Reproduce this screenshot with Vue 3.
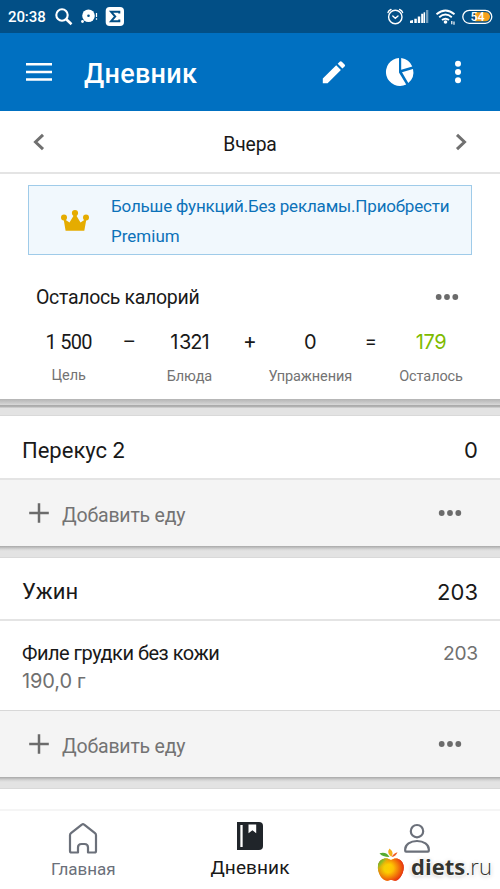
<script setup>
const totals = [
  { value: '1 500', label: 'Цель', kind: 'goal' },
  { value: '–', kind: 'sign' },
  { value: '1 321', label: 'Блюда', kind: 'tight' },
  { value: '+', kind: 'sign' },
  { value: '0', label: 'Упражнения' },
  { value: '=', kind: 'sign' },
  { value: '179', label: 'Осталось', kind: 'left' },
]
const meals = [
  { name: 'Перекус', suffix: '2', kcal: '0', items: [] },
  { name: 'Ужин', kcal: '203', items: [{ name: 'Филе грудки без кожи', amount: '190,0', unit: 'г', kcal: '203' }] },
]
</script>

<template>
  <div class="screen">
    <div class="status">
      <span class="clock">20:38</span>
      <svg class="st-left" width="80" height="33" viewBox="0 0 80 33">
        <circle cx="9" cy="15" r="5.700" fill="none" stroke="#fff" stroke-width="2.100" />
        <path d="M13 19 18.500 24.300" stroke="#fff" stroke-width="2.600" />
        <circle cx="35.500" cy="15.700" r="6.300" fill="#fff" />
        <circle cx="35.500" cy="15.700" r="1.300" fill="#024f86" />
        <circle cx="29.500" cy="21.500" r="1.400" fill="#fff" />
        <path d="M43.500 13v4M43.500 18.300v1.500" stroke="#fff" stroke-width="1.200" />
        <rect x="52.700" y="7" width="18.300" height="19" rx="4" fill="#fff" />
        <path d="M66.300 13.500v-1.700h-8.200l4.100 4.700-4.100 4.700h8.200v-1.700" fill="none" stroke="#024f86" stroke-width="2" />
      </svg>
      <svg class="st-right" width="110" height="33" viewBox="386 0 110 33">
        <g fill="none" stroke="#fff" stroke-width="1.400" stroke-linecap="round">
          <circle cx="395.300" cy="17" r="6.700" />
          <path d="M388 12.500q.5-2 3-3M402.600 12.500q-.5-2-3-3M392.800 16l2.500 2.300 2.700-2.300" />
        </g>
        <g fill="#fff">
          <path d="M410 20.700l3-.7v3h-3zM414.300 18.700h2.500V23h-2.500zM417.800 16.500h2.400V23h-2.400zM421.200 13.700h2.200V23h-2.200z" />
          <path opacity=".45" d="M426 10h2.300v13H426z" />
          <path d="M423.600 12.300h1.500V23h-1.500z" />
          <circle cx="445.500" cy="22" r="1.800" />
        </g>
        <g fill="none" stroke="#fff" stroke-width="1.900">
          <path d="M436.500 14.200q9-7.500 18 0M439.200 17.200q6.300-5.200 12.600 0M442 20q3.500-2.600 7 0" />
          <path d="M451.800 21v3.200M454 21.500v3.200" stroke-width="1.200" />
        </g>
        <rect x="462.800" y="10.300" width="29" height="13" rx="6.500" fill="none" stroke="#fff" stroke-width="1.300" />
        <path d="M475 12.300h10.500a4.500 4.500 0 0 1 0 9H475z" fill="#f5a11c" />
        <text x="477.500" y="21.200" text-anchor="middle" class="battery">54</text>
      </svg>
    </div>

    <header class="appbar">
      <svg width="26" height="20" viewBox="0 0 26 20"><path d="M0 2.200h26M0 9.900h26M0 17.600h26" stroke="#fff" stroke-width="2.500" /></svg>
      <h1>Дневник</h1>
      <svg class="pencil" width="24" height="24" viewBox="0 0 24 24"><path fill="#fff" d="M.8 23.300v-4.800L14.200 5.200l4.700 4.700L5.600 23.300zM15.700 3.700l2-2q1-1 2.100 0l2.800 2.700q1 1 0 2l-2.200 2.200z" /></svg>
      <svg class="pie" width="30" height="30" viewBox="0 0 30 30">
        <path fill="#fff" d="M14 1v14.600l7.200 11.900A14 14 0 1 1 14 1z" />
        <path fill="#fff" d="M16.200 1A14 14 0 0 1 27.300 9.600L16.200 12.700zM28 12a14 14 0 0 1-4.700 14L17 15.200z" />
      </svg>
      <svg class="more" width="8" height="24" viewBox="0 0 8 24"><g fill="#fff"><circle cx="4" cy="3.700" r="3" /><circle cx="4" cy="12" r="3" /><circle cx="4" cy="20.300" r="3" /></g></svg>
    </header>

    <div class="day">
      <svg width="12" height="18" viewBox="0 0 12 18"><path d="M10 1.800 2.500 9l7.500 7.200" /></svg>
      <span>Вчера</span>
      <svg width="12" height="18" viewBox="0 0 12 18"><path d="M2 1.800 9.500 9 2 16.200" /></svg>
    </div>

    <section class="summary">
      <div class="premium">
        <svg width="30" height="23" viewBox="0 0 30 23"><g fill="#e5ac00"><circle cx="4" cy="8.500" r="3" /><circle cx="15" cy="4" r="3.100" /><circle cx="26" cy="8.500" r="3" /><path d="M3.500 9.500 9.500 13.500 14 6h2l4.500 7.500 6-4L24.300 21.800H5.600z" /></g></svg>
        <p><span class="promo">Больше функций.Без рекламы.Приобрести</span><br /><span class="plan">Premium</span></p>
      </div>
      <div class="sum-head">
        <span>Осталось калорий</span>
        <svg class="dots" width="24" height="8" viewBox="0 0 24 8"><circle cx="3.700" cy="4" r="2.900" /><circle cx="12" cy="4" r="2.900" /><circle cx="20.300" cy="4" r="2.900" /></svg>
      </div>
      <div class="equation">
        <div v-for="(t, i) in totals" :key="i" class="term" :class="t.kind">
          <span class="value">{{ t.value }}</span>
          <span v-if="t.label" class="label">{{ t.label }}</span>
        </div>
      </div>
    </section>
    <div class="gap first"></div>

    <template v-for="meal in meals" :key="meal.name">
      <section class="meal" :class="{ filled: meal.items.length }">
        <div class="meal-head">
          <span>{{ meal.name }}<b v-if="meal.suffix">{{ meal.suffix }}</b></span>
          <span class="num">{{ meal.kcal }}</span>
        </div>
        <div v-for="item in meal.items" :key="item.name" class="food">
          <div>
            <div class="food-name">{{ item.name }}</div>
            <div class="amount"><span class="num">{{ item.amount }}</span> {{ item.unit }}</div>
          </div>
          <span class="num kcal">{{ item.kcal }}</span>
        </div>
        <div class="add">
          <svg width="20" height="20" viewBox="0 0 20 20"><path d="M10 .2v19.600M.2 10h19.600" stroke="#6b6b6b" stroke-width="2.500" /></svg>
          <span>Добавить еду</span>
          <svg class="dots" width="24" height="8" viewBox="0 0 24 8"><circle cx="3.700" cy="4" r="2.900" /><circle cx="12" cy="4" r="2.900" /><circle cx="20.300" cy="4" r="2.900" /></svg>
        </div>
      </section>
      <div class="gap"></div>
    </template>

    <nav class="tabs">
      <div class="tab">
        <svg width="30" height="32" viewBox="0 0 30 32"><path d="M2 13.200Q2 12 3 11.200L13.800 2.600q1.200-1 2.400 0L27 11.200q1 .8 1 2V29q0 1.500-1.500 1.500h-6.500V25.500q0-3.500-3.500-3.500h-3q-3.500 0-3.500 3.500v5h-6.500Q2 30.500 2 29z" fill="none" stroke="#6b707a" stroke-width="2.200" stroke-linejoin="round" /></svg>
        <span>Главная</span>
      </div>
      <div class="tab active">
        <svg width="26" height="28" viewBox="0 0 26 28"><path fill="#20252a" d="M0 0h22q4 0 4 4v20q0 4-4 4H0z" /><path d="M4.500 3v22" stroke="#fff" stroke-width="2.300" /><path fill="#fff" d="M11.500 2.500h7.700v8.700l-3.800-2.900-3.900 2.900z" /></svg>
        <span>Дневник</span>
      </div>
      <div class="tab">
        <svg width="28" height="32" viewBox="0 0 28 32"><g fill="none" stroke="#6b707a" stroke-width="2.200"><circle cx="14" cy="9.200" r="6.200" /><path d="M2.200 28.800v-1.600C2.200 22.500 7.200 19 14 19s11.800 3.500 11.800 8.200v1.600q0 .8-.8.800H3q-.8 0-.8-.8z" /></g></svg>
      </div>
    </nav>

    <div class="brand">
      <svg width="28" height="34" viewBox="0 0 28 34">
        <defs>
          <linearGradient id="skin" x1="0" y1="0" x2="1" y2=".25"><stop offset="0" stop-color="#4ca53b" /><stop offset=".25" stop-color="#c5d51b" /><stop offset=".52" stop-color="#ffc400" /><stop offset=".75" stop-color="#f36b16" /><stop offset="1" stop-color="#d82b16" /></linearGradient>
          <radialGradient id="blush" cx=".42" cy=".45" r=".6"><stop offset=".3" stop-color="#ffd000" stop-opacity=".75" /><stop offset="1" stop-color="#e8300d" stop-opacity=".9" /></radialGradient>
          <linearGradient id="leafy" x1="0" y1="0" x2=".8" y2=".7"><stop offset="0" stop-color="#3f9f38" /><stop offset=".4" stop-color="#8cc426" stop-opacity=".85" /><stop offset=".7" stop-color="#ffd000" stop-opacity="0" /></linearGradient>
        </defs>
        <path fill="url(#skin)" d="M14 12C9 8.500 2 11 1 17.500c-1 7 4 15 9 15.300 2 .2 2.500-.7 4-.7s2.500.9 4.500.7C23 32 28 23.500 26.500 17 25 11 19 8.500 14 12z" />
        <path fill="url(#blush)" d="M14 12C9 8.500 2 11 1 17.500c-1 7 4 15 9 15.300 2 .2 2.500-.7 4-.7s2.500.9 4.500.7C23 32 28 23.500 26.500 17 25 11 19 8.500 14 12z" />
        <path fill="url(#leafy)" d="M14 12C9 8.500 2 11 1 17.500q-.3 3 .5 6Q5 18 14 19z" />
        <path fill="#57ab31" d="M2.500 5.200q7-2 10 3.800Q5 9 2.500 5.200z" /><path fill="#f5ae18" d="M12.500.5q5 4 1.800 8.300-5-4-1.800-8.300z" /><path fill="#ef5d25" d="M20.500 4.300Q19 8.500 14.800 9q1.500-3.800 5.700-4.700z" />
      </svg>
      <span class="brand-name">diets</span><span class="brand-tld">.ru</span>
    </div>
  </div>
</template>

<style>
body { margin: 0; }
</style>
<style scoped>
* { box-sizing: border-box; }
.screen { position: relative; width: 500px; height: 889px; overflow: hidden; background: #fff; color: #191919; font-family: Roboto, sans-serif; display: flex; flex-direction: column; }
.screen > * { flex: none; }
svg { display: block; flex: none; }
.status { height: 33px; background: #024f86; color: #fff; display: flex; align-items: center; padding: 0 4px 0 8px; }
.clock { width: 45px; font-size: 15px; font-weight: 500; letter-spacing: -.1px; }
.st-right { margin-left: auto; }
.battery { font: 500 12.500px Roboto, sans-serif; fill: #fff; }
.appbar { height: 78px; background: #0070c1; color: #fff; display: flex; align-items: center; padding: 0 38px 0 26px; }
.appbar h1 { margin: 4px auto 0 32px; font-size: 27px; font-weight: 500; line-height: 32px; letter-spacing: .3px; }
.pencil { margin-right: 39px; }
.pie { margin-right: 39px; }
.day { height: 63px; border-bottom: 2px solid #e4e4e4; display: flex; align-items: center; justify-content: space-between; padding: 1px 33px 0; }
.day path { fill: none; stroke: #707070; stroke-width: 3; }
.day span { font-size: 19.300px; padding-top: 4px; letter-spacing: -.1px; }
.summary { height: 225px; padding: 10.500px 28px 0; }
.premium { height: 70px; border: 1px solid #9fcbe9; background: #f1f8fd; display: flex; padding: 6.500px 0 0 31px; }
.premium svg { margin-top: 17px; }
.premium p { margin: 0 0 0 21px; color: #0c72b9; font-size: 17px; line-height: 29.500px; white-space: nowrap; }
.promo { letter-spacing: -.19px; }
.sum-head { height: 30px; margin-top: 27px; padding: 0 13px 0 8px; display: flex; align-items: center; justify-content: space-between; font-size: 19.500px; letter-spacing: -.32px; }
.sum-head span { padding-top: 1px; }
.dots { fill: #6b6b6b; }
.equation { display: grid; grid-template-columns: repeat(7, 60.400px); margin: 15.500px 0 0 10.500px; }
.term { display: flex; flex-direction: column; align-items: center; white-space: nowrap; }
.value { font-family: Inter, sans-serif; font-size: 20px; line-height: 30px; letter-spacing: -.3px; }
.goal .value, .sign .value { font-family: Roboto, sans-serif; }
.goal .value { letter-spacing: -.7px; }
.tight .value { word-spacing: -3px; letter-spacing: -1px; }
.left .value { color: #7ebb00; }
.label { color: #737373; font-size: 14.500px; line-height: 20px; margin-top: 10px; letter-spacing: -.1px; }
.goal .label { margin-top: 9px; }
.gap { height: 12px; background: linear-gradient(#a8a8a8, #d4d4d4 3px, #e3e3e3 5px, #e3e3e3 10.500px, #d9d9d9 11px); }
.gap.first { height: 17px; background: linear-gradient(#b4b4b4, #cbcbcb 4px, #d9d9d9 6px, #ababab 6.500px, #b4b4b4 8px, #e3e3e3 9px, #e3e3e3 15.500px, #d9d9d9 16px); }
.meal-head { height: 64px; border-bottom: 2px solid #e4e4e4; display: flex; align-items: center; justify-content: space-between; padding: 6px 22px 0; font-size: 22px; }
.filled .meal-head { height: 63px; }
.meal-head b { font: 400 22px Inter, sans-serif; margin-left: 5px; }
.num { font-family: Inter, sans-serif; }
.food { height: 89px; display: flex; justify-content: space-between; padding: 18px 22px 0; font-size: 20px; line-height: 28px; }
.food-name { letter-spacing: -.5px; }
.amount, .kcal { color: #707070; }
.amount { letter-spacing: -.1px; }
.kcal { font-size: 19.200px; letter-spacing: -.2px; }
.add { height: 66px; background: #f4f4f4; display: flex; align-items: center; padding: 0 38px 0 29px; color: #737373; font-size: 19.500px; letter-spacing: -.2px; }
.add span { margin: 4px auto 0 13px; }
.filled .add { height: 67px; border-top: 1px solid #d8d8d8; }
.tabs { height: 80px; margin-top: 20px; border-top: 2px solid #f5f5f5; display: grid; grid-template-columns: repeat(3, 166.667px); }
.tab { display: flex; flex-direction: column; align-items: center; padding-top: 11px; color: #6b707a; }
.tab span { font-size: 17px; line-height: 22px; margin-top: 4px; }
.tab.active { color: #191919; }
.tab.active span { font-size: 19px; margin-top: 7px; letter-spacing: .1px; }
.brand { position: absolute; left: 377px; top: 848px; display: flex; font-family: "Open Sans", sans-serif; font-size: 22px; line-height: 36px; color: #35352f; text-shadow: 0 0 2px #fff, 1px 1px 2px #fff, -1px -1px 2px #fff, 0 1px 4px #aaa; }
.brand-name { margin-left: 6px; font-weight: 700; }
.brand-tld { font-weight: 300; }
</style>
